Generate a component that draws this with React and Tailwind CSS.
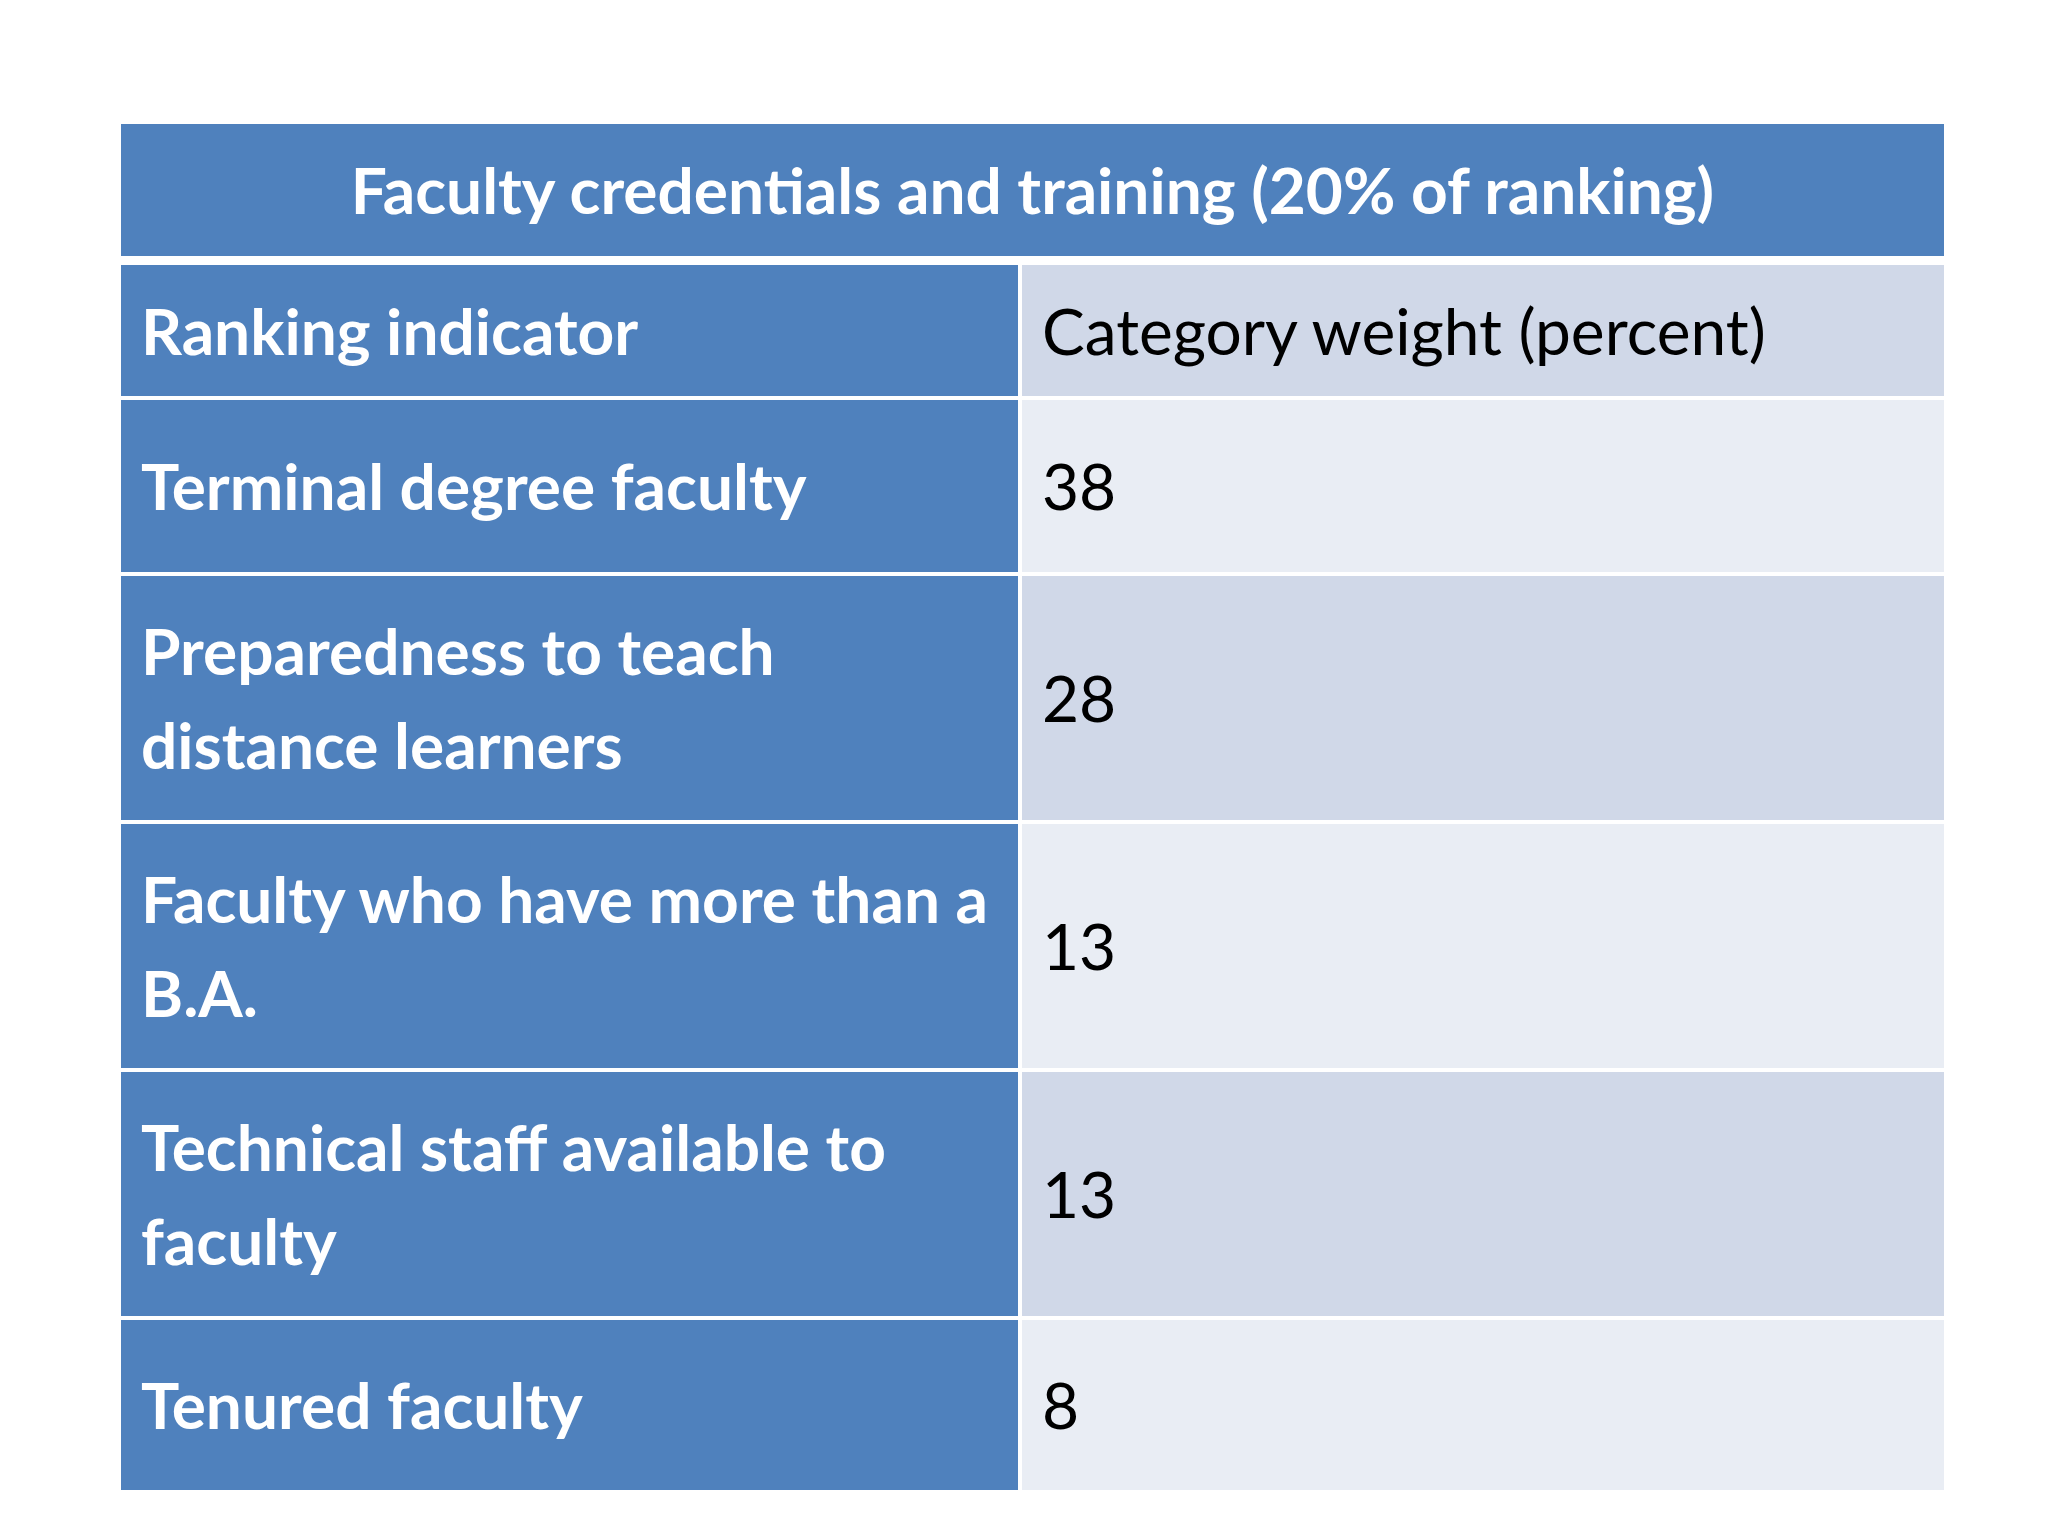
const ROWS = [
  { label: ['Terminal degree faculty'], value: '38', h: 'h-[172px]', band: 'bg-[#e9edf4]' },
  { label: ['Preparedness to teach', 'distance learners'], value: '28', h: 'h-[244px]', band: 'bg-[#d0d8e8]' },
  { label: ['Faculty who have more than a', 'B.A.'], value: '13', h: 'h-[244px]', band: 'bg-[#e9edf4]' },
  { label: ['Technical staff available to', 'faculty'], value: '13', h: 'h-[244px]', band: 'bg-[#d0d8e8]' },
  { label: ['Tenured faculty'], value: '8', h: 'h-[170px]', band: 'bg-[#e9edf4]' },
]

export default function App() {
  return (
    <div className="w-[2048px] h-[1536px] bg-white font-['Lato',sans-serif] pt-[124px] pl-[121px]">
      <div className="w-[1823px] flex flex-col">
        <div className="h-[132px] bg-[#4f81bd] flex items-center justify-center">
          <h1 className="text-white font-bold text-[64px] leading-none">
            Faculty credentials and training (20% of ranking)
          </h1>
        </div>

        <div className="mt-[9px] flex flex-col gap-[4px]">
          <div className="h-[131px] flex gap-[4px]">
            <div className="w-[897px] bg-[#4f81bd] flex items-center pl-[20px]">
              <span className="text-white font-bold text-[64px] leading-none">Ranking indicator</span>
            </div>
            <div className="flex-1 bg-[#d0d8e8] flex items-center pl-[20px]">
              <span className="text-black text-[64px] leading-none">Category weight (percent)</span>
            </div>
          </div>

          {ROWS.map((r, i) => (
            <div key={i} className={`${r.h} flex gap-[4px]`}>
              <div className="w-[897px] bg-[#4f81bd] flex items-center pl-[20px]">
                <div className="text-white font-bold text-[64px] leading-[94px] whitespace-nowrap">
                  {r.label.map((l, j) => <div key={j}>{l}</div>)}
                </div>
              </div>
              <div className={`flex-1 ${r.band} flex items-center pl-[20px]`}>
                <span className="text-black text-[64px] leading-none">{r.value}</span>
              </div>
            </div>
          ))}
        </div>
      </div>
    </div>
  )
}
